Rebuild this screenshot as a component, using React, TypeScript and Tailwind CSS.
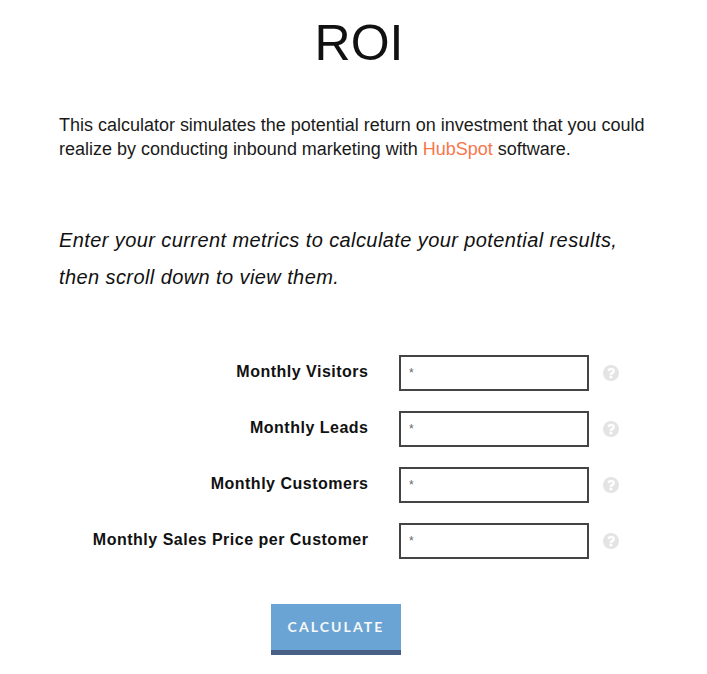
const rows = ["Monthly Visitors", "Monthly Leads", "Monthly Customers", "Monthly Sales Price per Customer"];

function Help() {
  return (
    <svg className="ml-[14px] size-4" viewBox="0 0 1536 1536" fill="#e4e4e4">
      <path d="M896 1248v-192q0-14-9-23t-23-9H672q-14 0-23 9t-9 23v192q0 14 9 23t23 9h192q14 0 23-9t9-23zm256-672q0-88-55.500-163T958 297t-170-41q-243 0-371 213-15 24 8 42l132 100q7 6 19 6 16 0 25-12 53-68 86-92 34-24 86-24 48 0 85.500 26t37.500 59q0 38-20 61t-68 45q-63 28-115.500 86.500T640 892v36q0 14 9 23t23 9h192q14 0 23-9t9-23q0-19 21.500-49.500T972 829q32-18 49-28.500t46-35 44.500-48 28-60.500 12.500-81zm384 192q0 209-103 385.500T1153.500 1433 768 1536t-385.500-103T103 1153.500 0 768t103-385.500T382.500 103 768 0t385.500 103T1433 382.500 1536 768z" />
    </svg>
  );
}

export default function App() {
  return (
    <main className="h-[674px] w-[707px] overflow-hidden bg-white pt-[14px] font-['Liberation_Sans',Arial,sans-serif] text-[#1a1a1a]">
      <h1 className="ml-[11px] text-center text-[50px] leading-[58px] text-[#111]">ROI</h1>
      <p className="mt-[41px] ml-[59px] text-[18px] leading-6 tracking-[-0.01px] whitespace-nowrap">
        This calculator simulates the potential return on investment that you could<br />
        realize by conducting inbound marketing with <a className="text-[#f8764a]">HubSpot</a> software.
      </p>
      <p className="mt-[61px] ml-[59px] text-[20px] leading-[37px] tracking-[0.41px] whitespace-nowrap text-[#111] italic">
        Enter your current metrics to calculate your potential results,<br />
        then scroll down to view them.
      </p>
      <form className="mt-[59px] flex flex-col gap-5">
        {rows.map((label) => (
          <div key={label} className="flex h-9 items-center">
            <label className="w-[368.500px] pb-[3px] text-right text-[16px] leading-5 font-bold tracking-[0.5px] text-[#111]">{label}</label>
            <input placeholder="*" className="ml-[30.500px] h-9 w-[190px] border-2 border-[#444] px-2 pb-px text-[12px] outline-none placeholder:text-[#666]" />
            <Help />
          </div>
        ))}
        <button type="button" className="mt-[25px] ml-[271px] h-[51px] w-[130px] border-b-[5px] border-[#485f88] bg-[#6aa4d4] pb-px font-[Lato,sans-serif] text-[14px] font-bold tracking-[2.1px] text-[#f8f8f8]">CALCULATE</button>
      </form>
    </main>
  );
}
